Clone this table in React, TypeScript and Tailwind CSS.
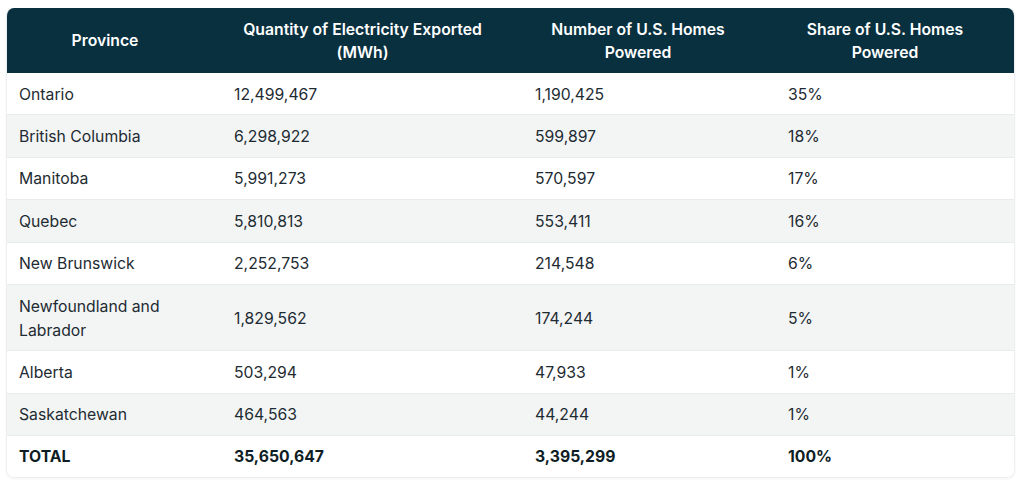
import React from "react";

const rows: [string, string, string, string][] = [
  ["Ontario", "12,499,467", "1,190,425", "35%"],
  ["British Columbia", "6,298,922", "599,897", "18%"],
  ["Manitoba", "5,991,273", "570,597", "17%"],
  ["Quebec", "5,810,813", "553,411", "16%"],
  ["New Brunswick", "2,252,753", "214,548", "6%"],
  ["Newfoundland and Labrador", "1,829,562", "174,244", "5%"],
  ["Alberta", "503,294", "47,933", "1%"],
  ["Saskatchewan", "464,563", "44,244", "1%"],
];

export default function App() {
  return (
    <div className="w-[1024px] h-[487px] bg-white pt-[8px] pl-[6px]" style={{ fontFamily: "Inter, 'Noto Sans', sans-serif" }}>
      <div className="w-[1009px] rounded-[8px] border border-[#eceeef] border-t-0 shadow-[0_1px_3px_rgba(0,0,0,0.05)] overflow-hidden">
        <div className="grid grid-cols-[196px_319px_232px_262px] bg-[#08303f] text-white text-[15.75px] font-semibold leading-[23px] text-center">
          <div className="py-[9.5px] px-[13px] flex items-center justify-center">Province</div>
          <div className="py-[9.5px] px-[30px]">Quantity of Electricity Exported (MWh)</div>
          <div className="py-[9.5px] px-[13px]">Number of U.S. Homes Powered</div>
          <div className="py-[9.5px] px-[40px]">Share of U.S. Homes Powered</div>
        </div>
        {rows.map((r, i) => (
          <div
            key={r[0]}
            className={`grid grid-cols-[196px_319px_232px_262px] items-center text-[15.75px] leading-6 text-[#1e2b32] border-b border-[#e9ecee] ${i % 2 === 1 ? "bg-[#f3f5f5]" : "bg-white"}`}
          >
            <div className="pt-[9.7px] pb-[7.7px] pl-[12px] pr-[24px]">{r[0]}</div>
            <div className="pt-[9.7px] pb-[7.7px] pl-[31px]">{r[1]}</div>
            <div className="pt-[9.7px] pb-[7.7px] pl-[13px]">{r[2]}</div>
            <div className="pt-[9.7px] pb-[7.7px] pl-[34px]">{r[3]}</div>
          </div>
        ))}
        <div className="grid grid-cols-[196px_319px_232px_262px] items-center text-[15.75px] leading-6 text-[#0f1d24] font-bold bg-white">
          <div className="py-[8.5px] pl-[12px]">TOTAL</div>
          <div className="py-[8.5px] pl-[31px]">35,650,647</div>
          <div className="py-[8.5px] pl-[13px]">3,395,299</div>
          <div className="py-[8.5px] pl-[34px]">100%</div>
        </div>
      </div>
    </div>
  );
}
